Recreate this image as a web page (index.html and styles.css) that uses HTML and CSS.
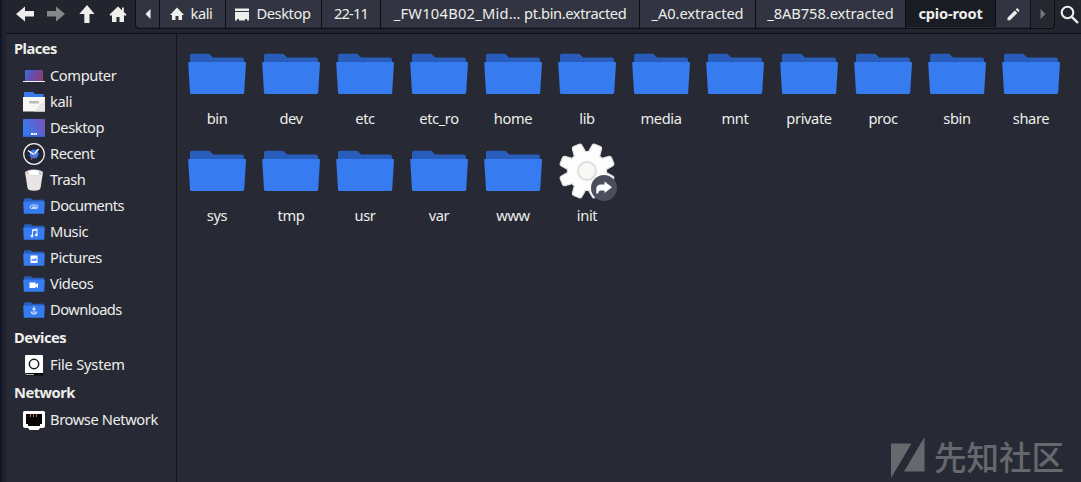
FILE: index.html
```
<!DOCTYPE html>
<html lang="en">
<head>
<meta charset="utf-8">
<title>cpio-root</title>
<link rel="stylesheet" href="styles.css">
</head>
<body>
<svg width="0" height="0" class="defs">
  <defs>
    <linearGradient id="screen" x1="0" y1="0" x2="1" y2="0.3"><stop offset="0" stop-color="#3e6fe0"/><stop offset=".5" stop-color="#644eae"/><stop offset="1" stop-color="#84417f"/></linearGradient>
    <linearGradient id="desk" x1="0" y1="0.6" x2="1" y2="0.2"><stop offset="0" stop-color="#347cf0"/><stop offset="1" stop-color="#7652bd"/></linearGradient>
    <symbol id="folder" viewBox="0 0 58 42">
      <path fill="#285dbb" d="M2 16V2.500Q2 .8 3.800.8H20Q21.500.8 22.500 2L25.200 4.600H53.500Q56 4.600 56 7V16z"/>
      <path fill="#367bf0" d="M.8 9H57.200Q58 9 58 10L56.200 39.500Q56 41 54.800 41H3.400Q2.100 41 2 39.500L.2 10Q.1 9 .8 9z"/>
    </symbol>
    <symbol id="mini" viewBox="0 0 22 16">
      <path fill="#285dbb" d="M1 5V1Q1 .2 2 .2H8L9.500 1.800H21V5z"/>
      <path fill="#367bf0" d="M.2 3.500H21.800L21.200 15.800H.8z"/>
    </symbol>
    <symbol id="home" viewBox="0 0 18 18">
      <path fill="#eeeeec" d="M9 1.500L.5 9.500L1.800 11L3 10V17H7.500V12H10.500V17H15V10L16.300 11L17.500 9.500L14.800 7V2.500H13V5.300z"/>
    </symbol>
  </defs>
</svg>
<div class="window">
  <header class="toolbar">
    <nav class="nav">
      <svg width="18" height="16" viewBox="0 0 18 16"><path fill="#eeeeec" d="M0 8L9 .5V5H18V10.500H9V15.500z"/></svg>
      <svg width="18" height="16" viewBox="0 0 18 16"><path fill="#858689" d="M18 8L9 .5V5H0V10.500H9V15.500z"/></svg>
      <svg class="up" width="16" height="18" viewBox="0 0 16 18"><path fill="#eeeeec" d="M8 0L15.500 9H10.500V18H5.300V9H.3z"/></svg>
      <svg class="homebtn" width="18" height="18"><use href="#home"/></svg>
    </nav>
    <div class="path">
      <span class="crumb w24"><svg width="6" height="10"><path fill="#eeeeec" d="M5.500 0V10L.5 5z"/></svg></span>
      <span class="crumb w66"><svg width="14" height="14" viewBox="0 0 14 14"><path fill="#eeeeec" d="M7 .5L0 8H2V13H5.500V9H8.500V13H12V8H14z"/></svg><span class="text">kali</span></span>
      <span class="crumb w96"><svg width="14" height="13"><path fill="#eeeeec" d="M0 .5H14V3H0zM0 4H14V12.500H12V11H10V12.500H4V11H2V12.500H0z"/></svg><span class="text">Desktop</span></span>
      <span class="crumb w59"><span class="text digits">22-11</span></span>
      <span class="crumb w259"><span class="text"><span class="wide">_FW104B02_Mid…</span> pt.bin.extracted</span></span>
      <span class="crumb w116"><span class="text mixed">_A0.extracted</span></span>
      <span class="crumb w150"><span class="text mixed">_8AB758.extracted</span></span>
      <span class="crumb w90 active"><span class="text">cpio-root</span></span>
      <span class="crumb w35"><svg width="13" height="13"><path fill="#eeeeec" d="M.5 9.700L7.800 2.400L10.300 4.900L3 12.200H.5zM8.700 1.500L9.600.6Q10.200.1 10.800.6L12.100 1.900Q12.600 2.500 12.100 3.100L11.200 4z"/></svg></span>
      <span class="crumb w24 off"><svg width="6" height="10"><path fill="#77787c" d="M.5 0V10L5.500 5z"/></svg></span>
    </div>
    <svg class="search" width="20" height="20" fill="none" stroke="#eeeeec"><circle cx="7.500" cy="7.500" r="5.800" stroke-width="2.100"/><path stroke-width="2.400" d="M11.800 11.800L18 18"/></svg>
  </header>
  <main class="content">
    <aside class="side">
      <h2>Places</h2>
      <ul>
        <li><svg width="22" height="22"><rect x="2" y="5" width="18" height="11" rx=".8" fill="url(#screen)"/><path fill="#f5f5f5" d="M0 16H22V17H0z"/></svg><span class="text">Computer</span></li>
        <li><svg width="22" height="22"><path fill="#367bf0" d="M1 7V2Q1 1 2 1H10L12 3H20.500V7z"/><path fill="#f7f7f5" d="M0 6H22V20.500H0z"/><path fill="#e5e7e6" d="M22 8V20.500H11z"/><rect x="6" y="10" width="10" height="2.500" rx="1" fill="#bcbcbc"/></svg><span class="text">kali</span></li>
        <li><svg width="22" height="22"><rect y="2" width="22" height="18" rx=".7" fill="url(#desk)"/><path fill="#3264ce" d="M0 18.500H22V20H0z"/><path fill="#fff" d="M8 16H10V18H8zM10.500 16H12.500V18H10.500zM13 16H14V18H13z"/></svg><span class="text">Desktop</span></li>
        <li><svg width="22" height="22"><circle cx="11" cy="11" r="10.300" fill="#22252e" stroke="#f2f2f2" stroke-width="1.200"/><circle cx="11" cy="11" r="4.500" fill="#367bf0"/><path d="M5 7.500L11 11.500L15.500 6" fill="none" stroke="#fff" stroke-width="1.400"/><path d="M11.500 10.500L8 17" stroke="#a64c60"/></svg><span class="text">Recent</span></li>
        <li><svg width="22" height="22"><path fill="#e7e6e4" d="M2 3L4.500 19Q5 21.800 11 21.800T17.500 19L20 3z"/><ellipse cx="11" cy="3.500" rx="9" ry="3" fill="#d4d3d1"/><path fill="#fff" d="M4 4L6 2L10 1L15 1.700L18 4L15 6H7z"/><path stroke="#e5aa60" d="M4 3L5.500 5"/><path stroke="#4b86b4" d="M16 3.500L17.500 4.800"/></svg><span class="text">Trash</span></li>
        <li><svg width="22" height="22"><use href="#mini" y="3" width="22" height="16"/><path fill="none" stroke="#c5daff" d="M14 13.500H9Q7 13.500 7 12T9 10H13Q15.500 10 15 11.800T13 12.500H9.500V11.800H13"/></svg><span class="text tight">Documents</span></li>
        <li><svg width="22" height="22"><use href="#mini" y="3" width="22" height="16"/><path fill="#e9f1ff" d="M9 8.500L14.500 7.500V14H13.500V9.500L10 10.200V15H9z"/><circle cx="9" cy="15" r="1.400" fill="#e9f1ff"/><circle cx="13.300" cy="14" r="1.400" fill="#e9f1ff"/></svg><span class="text">Music</span></li>
        <li><svg width="22" height="22"><use href="#mini" y="3" width="22" height="16"/><path fill="#fff" d="M7.500 8.500H14.500V16H7.500z"/><path fill="#659af4" d="M8.500 14V12.500L10 11.500L11 12.500L12.500 10.500L13.500 12V14z"/></svg><span class="text">Pictures</span></li>
        <li><svg width="22" height="22"><use href="#mini" y="3" width="22" height="16"/><path fill="#fff" d="M6.500 9.500H12.500V11.500L15 10V15L12.500 13.500V15H6.500z"/></svg><span class="text">Videos</span></li>
        <li><svg width="22" height="22"><use href="#mini" y="3" width="22" height="16"/><path fill="none" stroke="#e2edff" stroke-width="1.100" d="M11 7.500V11M9.500 9.700L11 11.200L12.500 9.700M8.200 12.500Q8.500 15 11 15T13.800 12.500M9.500 13H12.500"/></svg><span class="text tight">Downloads</span></li>
      </ul>
      <h2>Devices</h2>
      <ul>
        <li><svg width="22" height="22"><rect x="2" y="1" width="18" height="18.500" rx="1" fill="#fff"/><circle cx="11" cy="10" r="4.700" fill="none" stroke="#171a21" stroke-width="1.500"/><path fill="#050608" d="M3 19H20V21.500H3z"/><path stroke="#bbb" d="M3 20.500H11"/></svg><span class="text fs">File System</span></li>
      </ul>
      <h2>Network</h2>
      <ul>
        <li><svg width="22" height="22"><path fill="#fff" d="M1.500 2H20.500Q22 2 22 3.500V17Q22 19 20 19H17L15.500 21H6.500L5 19H2Q0 19 0 17V3.500Q0 2 1.500 2z"/><path fill="#050505" d="M3 5H19V15H17V17H5V15H3z"/><path stroke="#b56f50" d="M7.500 5V8M10.500 5V8M13.500 5V8"/></svg><span class="text">Browse Network</span></li>
      </ul>
    </aside>
    <section class="files">
      <figure><svg><use href="#folder"/></svg><figcaption>bin</figcaption></figure>
      <figure><svg><use href="#folder"/></svg><figcaption>dev</figcaption></figure>
      <figure><svg><use href="#folder"/></svg><figcaption>etc</figcaption></figure>
      <figure><svg><use href="#folder"/></svg><figcaption>etc_ro</figcaption></figure>
      <figure><svg><use href="#folder"/></svg><figcaption>home</figcaption></figure>
      <figure><svg><use href="#folder"/></svg><figcaption>lib</figcaption></figure>
      <figure><svg><use href="#folder"/></svg><figcaption>media</figcaption></figure>
      <figure><svg><use href="#folder"/></svg><figcaption>mnt</figcaption></figure>
      <figure><svg><use href="#folder"/></svg><figcaption>private</figcaption></figure>
      <figure><svg><use href="#folder"/></svg><figcaption>proc</figcaption></figure>
      <figure><svg><use href="#folder"/></svg><figcaption>sbin</figcaption></figure>
      <figure><svg><use href="#folder"/></svg><figcaption>share</figcaption></figure>
      <figure><svg><use href="#folder"/></svg><figcaption>sys</figcaption></figure>
      <figure><svg><use href="#folder"/></svg><figcaption>tmp</figcaption></figure>
      <figure><svg><use href="#folder"/></svg><figcaption>usr</figcaption></figure>
      <figure><svg><use href="#folder"/></svg><figcaption>var</figcaption></figure>
      <figure><svg><use href="#folder"/></svg><figcaption>www</figcaption></figure>
      <figure class="init"><svg viewBox="0 0 60 60">
        <g transform="translate(30 29)">
          <g fill="#fdfdfd" stroke="#e2e2e0" stroke-width="1.200" stroke-linejoin="round">
            <g transform="rotate(22.500)">
              <path id="tooth" d="M-6.300 -16L-5 -26Q-4.800 -27.500 -3 -27.700H3Q4.800 -27.500 5 -26L6.300 -16z"/>
              <use href="#tooth" transform="rotate(45)"/><use href="#tooth" transform="rotate(90)"/><use href="#tooth" transform="rotate(135)"/><use href="#tooth" transform="rotate(180)"/><use href="#tooth" transform="rotate(225)"/><use href="#tooth" transform="rotate(270)"/><use href="#tooth" transform="rotate(315)"/>
            </g>
            <circle r="19.500"/>
          </g>
          <circle r="19" fill="#fdfdfd" stroke="none"/>
          <g fill="#fdfdfd" transform="rotate(22.500)">
            <path id="fill" d="M-5 -16L-4.300 -25.500H4.300L5 -16z"/>
            <use href="#fill" transform="rotate(45)"/><use href="#fill" transform="rotate(90)"/><use href="#fill" transform="rotate(135)"/><use href="#fill" transform="rotate(180)"/><use href="#fill" transform="rotate(225)"/><use href="#fill" transform="rotate(270)"/><use href="#fill" transform="rotate(315)"/>
          </g>
          <circle r="9" fill="#f8f8f7" stroke="#dededb" stroke-width="2"/>
        </g>
        <circle cx="47" cy="46" r="13" fill="#4b4e5c"/>
        <path fill="#fff" d="M39.300 51.500V47Q39.300 42.500 44 42.500H47.500V39.500L55 45.300L47.500 51V48.500H44Q41.300 48.500 41.300 51.500z"/>
      </svg><figcaption>init</figcaption></figure>
    </section>
  </main>
  <div class="watermark"><svg width="34" height="42"><path fill="#66686d" d="M0 6.500H20.500L0 41zM33.500 0V34.500H13z"/></svg><span>先知社区</span></div>
</div>
</body>
</html>
```
FILE: styles.css
```
* { box-sizing: border-box; }
body { margin: 0; background: #12142a; overflow: hidden; color: #eeeeec; font: 14.67px/20px "Noto Sans", sans-serif; letter-spacing: -.4px; }
.defs { display: block; position: absolute; }
svg { display: block; flex: none; }
.text { padding-bottom: 2px; }
.window { position: relative; height: 482px; margin-left: 2px; border-left: 4px solid #20222b; background: #272a34; }
.toolbar { height: 34px; display: flex; background: #23252e; border-bottom: 1px solid #0d0f14; }
.nav { width: 129px; height: 28px; display: flex; align-items: center; padding-left: 10px; gap: 13px; }
.up { margin-left: 1px; }
.homebtn { margin-left: 1px; }
.path { display: flex; width: 920px; height: 29px; background: #0d0f14; padding: 0 0 1px 1px; border-radius: 0 0 4px 4px; }
.crumb { display: flex; align-items: center; justify-content: center; gap: 7px; height: 28px; background: #323541; border-right: 1px solid #0d0f14; box-shadow: inset 0 -1px #292c37; white-space: nowrap; }
.crumb:first-child { border-bottom-left-radius: 4px; }
.digits { letter-spacing: -.9px; }
.wide { letter-spacing: .25px; }
.mixed { letter-spacing: -.05px; }
.w24 { width: 24px; } .w66 { width: 66px; padding-right: 2px; gap: 6px; } .w96 { width: 96px; padding-right: 1px; }
.w59 { width: 59px; } .w259 { width: 259px; } .w116 { width: 116px; } .w150 { width: 150px; } .w90 { width: 90px; } .w35 { width: 35px; }
.active { background: #1a1c24; font-weight: 700; letter-spacing: -.2px; }
.off { background: #252730; border-radius: 0 0 4px; }
.search { margin: 5px 0 0 5px; }
.content { display: flex; height: 448px; }
.side { width: 171px; border-right: 1px solid #111319; padding-top: 2px; }
h2 { font-size: 14.67px; line-height: 25px; height: 27px; margin: 0 0 0 8px; letter-spacing: -.5px; }
ul { list-style: none; margin: 0; padding: 0; }
li { height: 26px; display: flex; align-items: center; gap: 5px; padding-left: 17px; white-space: nowrap; }
ul + h2 { height: 29px; line-height: 28px; }
.fs { letter-spacing: -.2px; }
.tight { letter-spacing: -.55px; }
.files { display: grid; grid-template-columns: repeat(12, 74px); grid-auto-rows: 97px; align-content: start; padding: 19px 0 0 3px; }
figure { margin: 0; text-align: center; }
figure svg { width: 58px; height: 42px; margin: 0 auto 13px; }
.init svg { width: 60px; height: 60px; margin: -8px auto 3px; }
.watermark { position: absolute; left: 885px; top: 437px; display: flex; color: #66686d; font: 500 32.500px/38px "Noto Sans CJK SC", sans-serif; letter-spacing: 0; gap: 9px; white-space: nowrap; }
```
